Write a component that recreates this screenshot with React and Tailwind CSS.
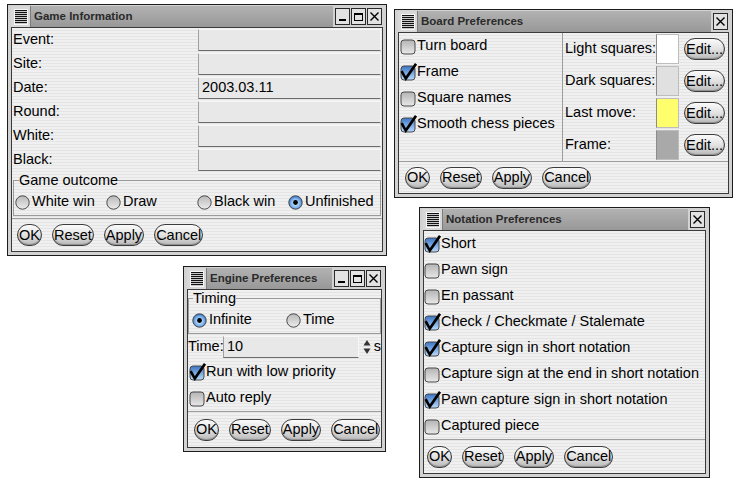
import React from "react";

const stripes =
  "bg-[image:repeating-linear-gradient(to_bottom,#f0f0f0_0px,#f0f0f0_2px,#e4e4e4_2px,#e4e4e4_3px)]";

function MenuIcon() {
  return (
    <div className="flex w-[20px] shrink-0 items-center justify-center border-r border-[#7c7c7c] bg-[#d8d8d8]">
      <svg width="14" height="16" viewBox="0 0 14 16">
        <rect x="0" y="0" width="14" height="16" fill="#f6f6f6" />
        {[1, 3, 5, 7, 9, 11, 13].map((y) => (
          <rect key={y} x="1" y={y} width="12" height="1.2" fill="#111" />
        ))}
      </svg>
    </div>
  );
}

function TitleButton({ kind }) {
  return (
    <div className="flex h-[17px] w-[15px] items-center justify-center border border-[#2a2a2a] bg-[#e2e2e2]">
      <svg width="11" height="11" viewBox="0 0 11 11">
        {kind === "min" && <rect x="2" y="8" width="7" height="2" fill="#000" />}
        {kind === "max" && (
          <>
            <rect x="1.5" y="2.5" width="8" height="7" fill="none" stroke="#000" />
            <rect x="1" y="2" width="9" height="2" fill="#000" />
          </>
        )}
        {kind === "close" && (
          <path d="M1.5 1.5 L9.5 9.5 M9.5 1.5 L1.5 9.5" stroke="#000" strokeWidth="1.4" />
        )}
      </svg>
    </div>
  );
}

function Window({ pos, title, full, children }) {
  return (
    <div className={`absolute flex flex-col border border-[#1c1c1c] bg-[#d2d2d2] px-[3px] pt-px pb-[3px] ${pos}`}>
      <div className="flex h-[21px] shrink-0">
        <MenuIcon />
        <div className="flex flex-1 items-center bg-linear-to-b from-[#b2b2b2] to-[#989898] pl-[3px] text-[11.5px] font-bold text-[#2a2a2a]">
          {title}
        </div>
        <div className="flex items-center gap-px bg-[#d2d2d2] pr-px pl-[2px]">
          {full && <TitleButton kind="min" />}
          {full && <TitleButton kind="max" />}
          <TitleButton kind="close" />
        </div>
      </div>
      <div className={`flex flex-1 flex-col border border-[#3a3a3a] ${stripes}`}>{children}</div>
    </div>
  );
}

function Check({ checked, label }) {
  return (
    <div className="flex h-[26px] items-center whitespace-nowrap">
      <svg width="17" height="18" viewBox="0 0 17 18" className="shrink-0">
        <defs>
          <linearGradient id="cbGray" x1="0" y1="0" x2="0" y2="1">
            <stop offset="0" stopColor="#b4b4b4" />
            <stop offset="1" stopColor="#e8e8e8" />
          </linearGradient>
          <linearGradient id="cbBlue" x1="0" y1="0" x2="0" y2="1">
            <stop offset="0" stopColor="#3a74c4" />
            <stop offset="1" stopColor="#b8dafc" />
          </linearGradient>
        </defs>
        <rect
          x="1"
          y="3"
          width="14"
          height="14"
          rx="3"
          fill={checked ? "url(#cbBlue)" : "url(#cbGray)"}
          stroke="#484848"
        />
        {checked && (
          <path d="M1.6 8.2 L5.8 15.6 L16 0.8" fill="none" stroke="#000" strokeWidth="2.6" />
        )}
      </svg>
      <span>{label}</span>
    </div>
  );
}

function Radio({ on, label }) {
  return (
    <div className="flex items-center whitespace-nowrap">
      <svg width="15" height="15" viewBox="0 0 15 15" className="shrink-0">
        <defs>
          <linearGradient id="rdGray" x1="0" y1="0" x2="0" y2="1">
            <stop offset="0" stopColor="#b8b8b8" />
            <stop offset="1" stopColor="#ececec" />
          </linearGradient>
          <radialGradient id="rdBlue" cx="0.5" cy="0.55" r="0.55">
            <stop offset="0" stopColor="#e8f4ff" />
            <stop offset="0.6" stopColor="#7fb6ee" />
            <stop offset="1" stopColor="#2f6cc0" />
          </radialGradient>
        </defs>
        <circle cx="7.5" cy="7.5" r="6.7" fill={on ? "url(#rdBlue)" : "url(#rdGray)"} stroke="#4a4a4a" />
        {on && <circle cx="7.5" cy="7.5" r="2.4" fill="#000" />}
      </svg>
      <span className="pl-[2px]">{label}</span>
    </div>
  );
}

function Btn({ children }) {
  return (
    <div className="flex h-[22px] shrink-0 items-center whitespace-nowrap rounded-full border-[1.5px] border-[#3c3c3c] bg-linear-to-b from-[#fbfbfb] via-[#e2e2e2] to-[#b9b9b9] px-px leading-none text-black shadow-[inset_0_-1px_1px_#8e8e8e]">
      {children}
    </div>
  );
}

function ButtonRow({ className }) {
  return (
    <div className={`flex flex-1 items-center gap-[10px] border-t border-[#9c9c9c] ${className}`}>
      <Btn>OK</Btn>
      <Btn>Reset</Btn>
      <Btn>Apply</Btn>
      <Btn>Cancel</Btn>
    </div>
  );
}

function Field({ value }) {
  return (
    <div className="flex h-[22px] items-center border border-[#f7f7f7] border-b-[#6c6c6c] border-l-[#a0a0a0] bg-[#e8e8e8] pl-[3px]">
      {value}
    </div>
  );
}

const gameRows = [
  ["Event:", ""],
  ["Site:", ""],
  ["Date:", "2003.03.11"],
  ["Round:", ""],
  ["White:", ""],
  ["Black:", ""],
];

const swatches = [
  ["Light squares:", "bg-white"],
  ["Dark squares:", "bg-[#e0e0e0]"],
  ["Last move:", "bg-[#ffff6e]"],
  ["Frame:", "bg-[#a9a9a9]"],
];

const notation = [
  ["Short", true],
  ["Pawn sign", false],
  ["En passant", false],
  ["Check / Checkmate / Stalemate", true],
  ["Capture sign in short notation", true],
  ["Capture sign at the end in short notation", false],
  ["Pawn capture sign in short notation", true],
  ["Captured piece", false],
];

export default function App() {
  return (
    <div className="relative h-[496px] w-[754px] overflow-hidden bg-white font-['Liberation_Sans',Arial,sans-serif] text-[14.5px] text-black">
      <Window pos="left-[7px] top-[4px] w-[380px] h-[252px]" title="Game Information" full>
        <div className="grid grid-cols-[185px_1fr] pr-px pl-px">
          {gameRows.map(([label, value]) => (
            <React.Fragment key={label}>
              <div className="flex h-[24px] items-center">{label}</div>
              <div className="flex h-[24px] items-center">
                <div className="flex-1">
                  <Field value={value} />
                </div>
              </div>
            </React.Fragment>
          ))}
        </div>
        <fieldset className="mx-px border border-[#9a9a9a] px-px">
          <legend className="ml-[4px] leading-[17px]">Game outcome</legend>
          <div className="grid h-[26px] grid-cols-4 items-center">
            <Radio label="White win" />
            <Radio label="Draw" />
            <Radio label="Black win" />
            <Radio on label="Unfinished" />
          </div>
        </fieldset>
        <ButtonRow className="mt-[2px] pl-[5px]" />
      </Window>

      <Window pos="left-[394px] top-[9px] w-[339px] h-[189px]" title="Board Preferences">
        <div className="flex">
          <div className="w-[164px] shrink-0 border-r border-[#9c9c9c] pl-px">
            <Check label="Turn board" />
            <Check checked label="Frame" />
            <Check label="Square names" />
            <Check checked label="Smooth chess pieces" />
          </div>
          <div className="flex-1 pl-[2px]">
            {swatches.map(([label, color]) => (
              <div key={label} className="flex h-[32px] items-center">
                <span className="w-[91px] shrink-0 whitespace-nowrap">{label}</span>
                <div className={`h-[30px] w-[23px] shrink-0 border border-[#bdbdbd] border-l-[#8c8c8c] ${color}`} />
                <div className="ml-[5px]">
                  <Btn>Edit...</Btn>
                </div>
              </div>
            ))}
          </div>
        </div>
        <ButtonRow className="pl-[6px]" />
      </Window>

      <Window pos="left-[183px] top-[266px] w-[203px] h-[186px]" title="Engine Preferences" full>
        <fieldset className="border border-[#9a9a9a] pl-[3px]">
          <legend className="ml-px leading-[17px]">Timing</legend>
          <div className="grid h-[26px] grid-cols-2 items-center">
            <Radio on label="Infinite" />
            <Radio label="Time" />
          </div>
        </fieldset>
        <div className="flex h-[25px] items-center">
          <span className="w-[35px]">Time:</span>
          <div className="w-[140px]">
            <Field value="10" />
          </div>
          <svg width="12" height="20" viewBox="0 0 12 20" className="ml-[2px] shrink-0">
            <path d="M6 3 L9.5 8.5 L2.5 8.5 Z" fill="#333" />
            <path d="M6 17 L9.5 11.5 L2.5 11.5 Z" fill="#333" />
          </svg>
          <span className="pl-[1px]">s</span>
        </div>
        <div className="pl-px">
          <Check checked label="Run with low priority" />
          <Check label="Auto reply" />
        </div>
        <ButtonRow className="pl-[6px]" />
      </Window>

      <Window pos="left-[419px] top-[207px] w-[291px] h-[271px]" title="Notation Preferences">
        <div>
          {notation.map(([label, on]) => (
            <Check key={label} checked={on} label={label} />
          ))}
        </div>
        <ButtonRow className="pl-[3px]" />
      </Window>
    </div>
  );
}
